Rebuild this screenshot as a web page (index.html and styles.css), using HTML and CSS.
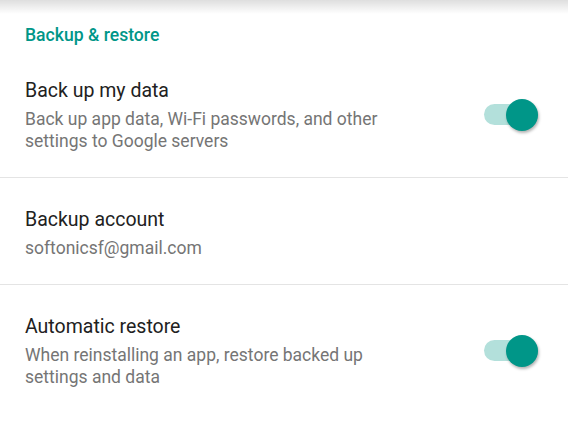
FILE: index.html
```html
<!DOCTYPE html>
<html lang="en">
<head>
    <meta charset="UTF-8">
    <meta name="viewport" content="width=device-width, initial-scale=1.0">
    <title>Backup &amp; restore</title>
    <link rel="stylesheet" href="styles.css">
</head>
<body>
    <div class="toolbar-shadow"></div>
    <div class="settings">
        <h2 class="category">Backup &amp; restore</h2>
        <div class="pref">
            <div class="pref-text">
                <div class="pref-title">Back up my data</div>
                <div class="pref-summary">Back up app data, Wi-Fi passwords, and other settings to Google servers</div>
            </div>
            <div class="switch on"><span class="thumb"></span></div>
        </div>
        <div class="pref">
            <div class="pref-text">
                <div class="pref-title">Backup account</div>
                <div class="pref-summary">softonicsf@gmail.com</div>
            </div>
        </div>
        <div class="pref">
            <div class="pref-text">
                <div class="pref-title">Automatic restore</div>
                <div class="pref-summary">When reinstalling an app, restore backed up settings and data</div>
            </div>
            <div class="switch on"><span class="thumb"></span></div>
        </div>
    </div>
</body>
</html>
```

FILE: styles.css
```css
body {
    margin: 0;
    font-family: Roboto, "Noto Sans", sans-serif;
    background-color: #fff;
    color: #212121;
    height: 100vh;
    overflow: hidden;
    position: relative;
}
.toolbar-shadow {
    position: absolute;
    top: 0;
    left: 0;
    right: 0;
    height: 14px;
    background: linear-gradient(to bottom, rgba(0, 0, 0, 0.13), rgba(0, 0, 0, 0));
}
.category {
    margin: 0;
    padding: 23px 25px 1.5px;
    font-size: 17.6px;
    line-height: 24px;
    font-weight: 500;
    color: #009688;
}
.pref {
    display: flex;
    align-items: center;
    padding: 29px 30px 25px 25px;
    border-bottom: 1px solid #e4e4e4;
}
.pref:last-child {
    border-bottom: none;
}
.pref-text {
    flex: 1;
    max-width: 395px;
}
.pref-title {
    font-size: 19.5px;
    line-height: 26px;
}
.pref-summary {
    margin-top: 4px;
    font-size: 17.5px;
    line-height: 22px;
    color: #757575;
}
.switch {
    margin-left: auto;
    position: relative;
    width: 54px;
    height: 21px;
    border-radius: 11px;
    background-color: #b3e0db;
}
.switch .thumb {
    position: absolute;
    top: -5.5px;
    right: 0;
    width: 32px;
    height: 32px;
    border-radius: 50%;
    background-color: #009688;
    box-shadow: 1px 2px 3px rgba(0, 0, 0, 0.3);
}
```
